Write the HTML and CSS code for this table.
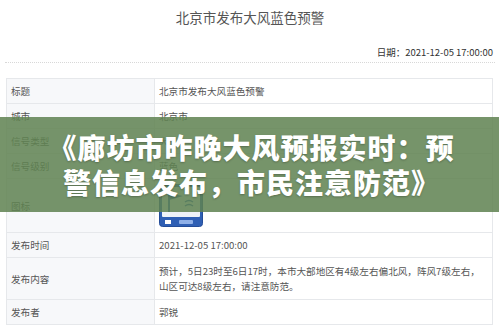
FILE: index.html
```html
<!DOCTYPE html>
<html lang="zh-CN">
<head>
<meta charset="utf-8">
<link rel="stylesheet" href="styles.css">
</head>
<body>
<div class="page">
  <h1 class="title">北京市发布大风蓝色预警</h1>
  <div class="date">日期：2021-12-05 17:00:00</div>
  <div class="rule"></div>
  <table class="info">
    <tr class="r1"><td class="k">标题</td><td class="v">北京市发布大风蓝色预警</td></tr>
    <tr class="r2"><td class="k">城市</td><td class="v">北京市</td></tr>
    <tr class="r3"><td class="k">信号类型</td><td class="v">大风</td></tr>
    <tr class="r4"><td class="k">信号级别</td><td class="v">蓝色</td></tr>
    <tr class="r5"><td class="k">图标</td><td class="v">
      <svg class="icon" width="44" height="43" viewBox="0 0 44 43">
        <rect x="0.5" y="0.5" width="43" height="42" rx="3" fill="#2f5fb4" stroke="#244d99"/>
        <rect x="3" y="3" width="38" height="30" rx="1" fill="#eef2f8"/>
        <path d="M10 8 L10 28" stroke="#2f5fb4" stroke-width="2"/>
        <path d="M10 9 L24 12 L10 16 Z" fill="#2f5fb4"/>
        <path d="M26 18 q4 -3 8 0 M26 22 q4 -3 8 0" stroke="#2f5fb4" stroke-width="1.5" fill="none"/>
        <rect x="6" y="36" width="6" height="4" fill="#ffffff"/>
        <rect x="20" y="36" width="14" height="4" rx="1" fill="#8fb0e8"/>
      </svg>
    </td></tr>
    <tr class="r6"><td class="k">发布时间</td><td class="v">2021-12-05 17:00:00</td></tr>
    <tr class="r7"><td class="k">发布内容</td><td class="v multi">预计，5日23时至6日17时，本市大部地区有4级左右偏北风，阵风7级左右，<br>山区可达8级左右，请注意防范。</td></tr>
    <tr class="r8"><td class="k">发布者</td><td class="v">郭锐</td></tr>
  </table>
</div>
<div class="banner">
  <p class="banner-text">《廊坊市昨晚大风预报实时：预<br>警信息发布，市民注意防范》</p>
</div>
</body>
</html>
```
FILE: styles.css
```css
html, body {
  margin: 0;
  padding: 0;
  background: #ffffff;
}
body {
  width: 499px;
  height: 331px;
  overflow: hidden;
  position: relative;
  font-family: "Noto Sans CJK SC", "Noto Sans", sans-serif;
  color: #555;
}
.page {
  padding: 0 4px 0 5px;
}
.title {
  margin: 0;
  height: 35px;
  line-height: 35px;
  font-size: 13.5px;
  font-weight: 400;
  text-align: center;
  color: #555;
  letter-spacing: 0;
}
.date {
  text-align: right;
  font-size: 9.5px;
  line-height: 14px;
  margin-top: 10px;
  padding-right: 2px;
  color: #333;
}
.rule {
  margin-top: 3px;
  border-top: 1px dotted #d8d8d8;
}
.info {
  margin-top: 15px;
  margin-left: 1px;
  width: 487px;
  border-collapse: collapse;
  font-size: 9.6px;
  color: #555;
}
.info td {
  border: 1px solid #e6e8eb;
  padding: 0 4px;
  height: 24px;
  vertical-align: middle;
}
.info td.k {
  width: 139px;
  background: #f7f8fa;
}
.info td.v {
  background: #ffffff;
}
.r5 td {
  height: 53px;
}
.r7 td {
  height: 41px;
}
.multi {
  line-height: 15px;
}
.icon {
  display: block;
  margin-top: 0;
}
.banner {
  position: absolute;
  left: 0;
  top: 117px;
  width: 499px;
  height: 95px;
  background: rgba(95, 130, 81, 0.86);
  display: flex;
  align-items: center;
  justify-content: center;
}
.banner-text {
  margin: 0;
  padding-left: 4px;
  color: #ffffff;
  font-size: 28px;
  font-weight: 900;
  line-height: 35px;
  letter-spacing: 1px;
  text-align: center;
  text-shadow: 0 1px 2px rgba(0, 0, 0, 0.25);
}
```
